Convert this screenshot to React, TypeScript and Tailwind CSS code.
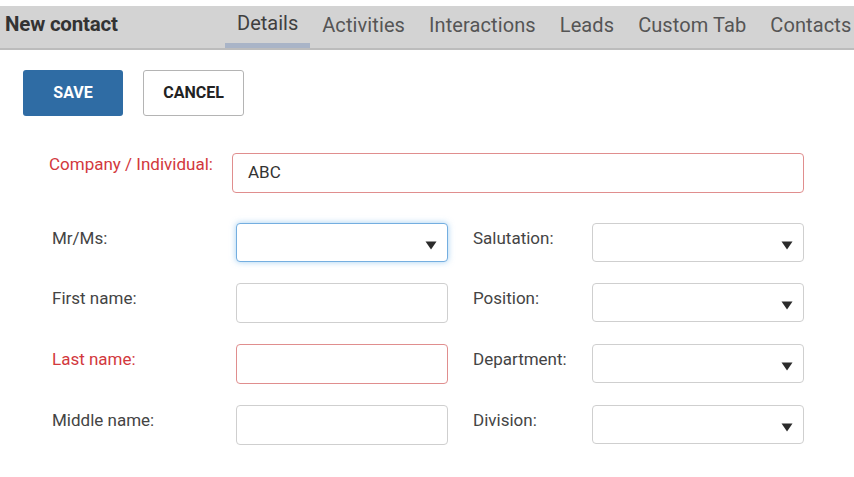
import type { ReactNode } from "react";

const tabs = ["Details", "Activities", "Interactions", "Leads", "Custom Tab", "Contacts"];

function Caret() {
  return (
    <svg
      width="12"
      height="9"
      viewBox="0 0 12 9"
      className="absolute right-[10px] bottom-[11px]"
    >
      <path d="M0.5 0.5 H11.5 L6 8.5 Z" fill="#2b2b2b" />
    </svg>
  );
}

function Select({ focused }: { focused?: boolean }) {
  return (
    <div
      className={
        focused
          ? "relative h-[39px] w-[212px] rounded-[4px] border border-[#74aee0] bg-white shadow-[0_0_6px_rgba(102,175,233,0.6)]"
          : "relative h-[39px] w-[212px] rounded-[4px] border border-[#cfcfcf] bg-white"
      }
    >
      <Caret />
    </div>
  );
}

function TextInput({ required }: { required?: boolean }) {
  return (
    <div
      className={
        required
          ? "h-[40px] w-[212px] rounded-[4px] border border-[#e08e8e] bg-white"
          : "h-[40px] w-[212px] rounded-[4px] border border-[#cfcfcf] bg-white"
      }
    />
  );
}

function Field({
  label,
  required,
  children,
  labelWidth,
}: {
  label: string;
  required?: boolean;
  children: ReactNode;
  labelWidth: string;
}) {
  return (
    <div className="flex items-start">
      <div
        className={`${labelWidth} pt-[5px] text-[17px] leading-[20px] ${
          required ? "text-[#d2383d]" : "text-[#444]"
        }`}
      >
        {label}
      </div>
      {children}
    </div>
  );
}

export default function App() {
  return (
    <div className="min-h-[477px] w-[854px] overflow-hidden bg-white font-['Roboto',sans-serif]">
      {/* header bar */}
      <div className="pt-[6px]">
        <div className="flex h-[44px] items-start overflow-hidden border-b-2 border-[#bcbcbc] bg-[#d3d3d3] pl-[5px]">
          <div className="w-[220px] shrink-0 pt-[6px] text-[20.5px] font-bold leading-[24px] tracking-[-0.2px] text-[#333]">
            New contact
          </div>
          <div className="flex h-full shrink-0">
            {tabs.map((t, i) => (
              <div
                key={t}
                className={
                  i === 0
                    ? "flex h-full flex-col px-3 pt-[5px] text-[20px] leading-[24px] text-[#3f3f3f]"
                    : "flex h-full flex-col px-3 pt-[7px] text-[20px] leading-[24px] tracking-[0.1px] text-[#555]"
                }
              >
                <span className="whitespace-nowrap">{t}</span>
                {i === 0 && <div className="mx-[-12px] mt-auto h-[5px] bg-[#a9b4c7]" />}
              </div>
            ))}
          </div>
        </div>
      </div>

      {/* actions */}
      <div className="mt-[20px] flex gap-[20px] pl-[23px]">
        <button
          type="button"
          className="h-[46px] w-[100px] rounded-[3px] bg-[#2f6ca4] text-[16px] font-bold text-white"
        >
          SAVE
        </button>
        <button
          type="button"
          className="h-[46px] w-[101px] rounded-[3px] border border-[#b4b4b4] bg-white text-[16px] font-bold text-[#222]"
        >
          CANCEL
        </button>
      </div>

      {/* company */}
      <div className="mt-[37px] flex items-start pl-[49px]">
        <div className="w-[183px] pt-[1px] text-[17px] leading-[20px] text-[#d2383d]">
          Company / Individual:
        </div>
        <div className="flex h-[40px] w-[572px] items-center rounded-[4px] border border-[#e08e8e] bg-white pl-[15px] text-[17px] text-[#333]">
          ABC
        </div>
      </div>

      {/* person grid */}
      <div className="mt-[30px] grid grid-cols-[421px_332px] gap-y-[21px] pl-[52px]">
        <Field label="Mr/Ms:" labelWidth="w-[184px]">
          <Select focused />
        </Field>
        <Field label="Salutation:" labelWidth="w-[119px]">
          <Select />
        </Field>
        <Field label="First name:" labelWidth="w-[184px]">
          <TextInput />
        </Field>
        <Field label="Position:" labelWidth="w-[119px]">
          <Select />
        </Field>
        <Field label="Last name:" required labelWidth="w-[184px]">
          <TextInput required />
        </Field>
        <Field label="Department:" labelWidth="w-[119px]">
          <Select />
        </Field>
        <Field label="Middle name:" labelWidth="w-[184px]">
          <TextInput />
        </Field>
        <Field label="Division:" labelWidth="w-[119px]">
          <Select />
        </Field>
      </div>
    </div>
  );
}
